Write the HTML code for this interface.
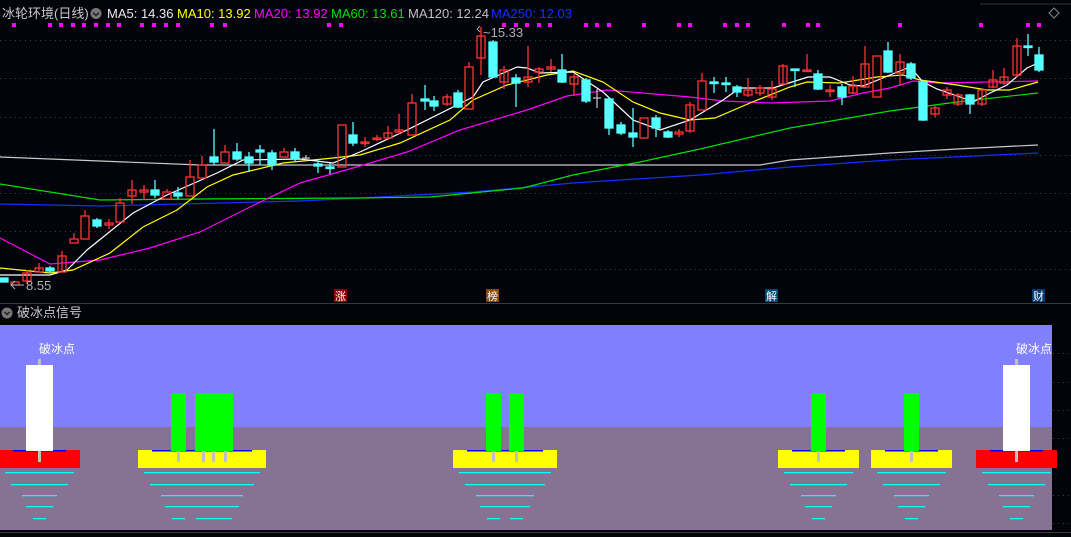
<!DOCTYPE html>
<html><head><meta charset="utf-8">
<style>
html,body{margin:0;padding:0;background:#03040b;width:1071px;height:537px;overflow:hidden}
svg{display:block}
text{font-family:"Liberation Sans","Noto Sans CJK SC",sans-serif}
</style></head>
<body>
<svg width="1071" height="537" viewBox="0 0 1071 537" xmlns="http://www.w3.org/2000/svg">
<rect width="1071" height="537" fill="#03040b"/>
<!-- header -->
<line x1="980" y1="4" x2="1071" y2="4" stroke="#333" stroke-width="1"/>
<text x="2" y="18" font-size="13" fill="#c8c8c8">冰轮环境(日线)</text>
<circle cx="96" cy="13.5" r="5.5" fill="#777"/>
<path d="M93 12.5 L96 15.5 L99 12.5" stroke="#222" stroke-width="1.5" fill="none"/>
<text x="107" y="18" font-size="13" fill="#e8e8e8">MA5: 14.36</text>
<text x="177" y="18" font-size="13" fill="#ffff00">MA10: 13.92</text>
<text x="254" y="18" font-size="13" fill="#ff00ff">MA20: 13.92</text>
<text x="331" y="18" font-size="13" fill="#00e000">MA60: 13.61</text>
<text x="408" y="18" font-size="13" fill="#c0c0c0">MA120: 12.24</text>
<text x="491" y="18" font-size="13" fill="#1030ff">MA250: 12.03</text>
<path d="M1054 8 L1059 13 L1054 18 L1049 13 Z" stroke="#888" fill="none"/>
<!-- magenta dots -->
<g fill="#ff00ff">
<rect x="12" y="23" width="4" height="4"/><rect x="48" y="23" width="4" height="4"/><rect x="59" y="23" width="4" height="4"/><rect x="71" y="23" width="4" height="4"/><rect x="82" y="23" width="4" height="4"/><rect x="94" y="23" width="4" height="4"/><rect x="106" y="23" width="4" height="4"/><rect x="117" y="23" width="4" height="4"/><rect x="140" y="23" width="4" height="4"/><rect x="152" y="23" width="4" height="4"/><rect x="164" y="23" width="4" height="4"/><rect x="176" y="23" width="4" height="4"/><rect x="210" y="23" width="4" height="4"/><rect x="223" y="23" width="4" height="4"/><rect x="327" y="23" width="4" height="4"/><rect x="339" y="23" width="4" height="4"/><rect x="502" y="23" width="4" height="4"/><rect x="514" y="23" width="4" height="4"/><rect x="525" y="23" width="4" height="4"/><rect x="537" y="23" width="4" height="4"/><rect x="548" y="23" width="4" height="4"/><rect x="584" y="23" width="4" height="4"/><rect x="595" y="23" width="4" height="4"/><rect x="607" y="23" width="4" height="4"/><rect x="642" y="23" width="4" height="4"/><rect x="677" y="23" width="4" height="4"/><rect x="688" y="23" width="4" height="4"/><rect x="723" y="23" width="4" height="4"/><rect x="735" y="23" width="4" height="4"/><rect x="746" y="23" width="4" height="4"/><rect x="782" y="23" width="4" height="4"/><rect x="806" y="23" width="4" height="4"/><rect x="816" y="23" width="4" height="4"/><rect x="898" y="23" width="4" height="4"/><rect x="979" y="23" width="4" height="4"/><rect x="1026" y="23" width="4" height="4"/><rect x="1037" y="23" width="4" height="4"/>
</g>
<!-- grid -->
<g stroke="#3a3a44" stroke-dasharray="1,4" stroke-width="1">
<line x1="0" y1="40.5" x2="1071" y2="40.5"/><line x1="0" y1="78.5" x2="1071" y2="78.5"/><line x1="0" y1="117.5" x2="1071" y2="117.5"/><line x1="0" y1="155.5" x2="1071" y2="155.5"/><line x1="0" y1="193.5" x2="1071" y2="193.5"/><line x1="0" y1="231.5" x2="1071" y2="231.5"/><line x1="0" y1="269.5" x2="1071" y2="269.5"/>
</g>
<!-- MA lines -->
<g fill="none" stroke-width="1.2">
<polyline stroke="#c8c8c8" points="0,157 100,161 200,165 360,165 680,165 760,165 790,160 890,153 957,149 1038,145"/>
<polyline stroke="#1030ff" points="0,204 100,206 300,201 360,198 473,192 573,183 700,175 790,167 890,160 1038,153"/>
<polyline stroke="#00e000" points="0,184 100,200 200,199 360,198 430,197 523,188 573,175 640,162 700,149 790,128 890,111 957,102 1038,93"/>
<polyline stroke="#ff00ff" points="0,238 50,264 100,260 150,248 200,232 250,207 300,183 360,166 407,152 460,130 527,110 567,96 607,90 690,97 723,101 770,103 830,101 863,93 890,88 913,81 937,83 1038,81"/>
<polyline stroke="#ffff00" points="0,268 50,273 73,270 110,253 143,227 177,210 207,187 233,175 283,163 333,158 360,155 400,143 450,120 473,100 507,85 547,75 573,71 603,82 633,102 660,113 690,120 715,118 750,103 790,87 807,82 840,83 877,77 903,75 920,80 957,85 987,90 1010,90 1038,82"/>
<polyline stroke="#ffffff" points="0,275 50,275 67,270 87,250 133,213 167,195 217,173 243,160 300,159 333,163 360,152 407,130 473,97 483,82 517,67 527,68 540,73 573,72 603,92 633,120 660,130 690,120 723,100 740,88 773,88 808,77 830,77 850,85 863,86 890,75 910,67 923,82 937,89 963,98 973,102 990,93 1007,85 1027,68 1038,63"/>
</g>
<!-- candles -->
<g stroke-width="1.3">
<g stroke="#ff3333" fill="none">
<rect x="11" y="282" width="8" height="3"/>
<line x1="27" y1="270" x2="27" y2="284"/><rect x="23" y="273" width="8" height="8"/>
<line x1="39" y1="263" x2="39" y2="272"/><rect x="35" y="268" width="8" height="4"/>
<line x1="62" y1="251" x2="62" y2="272"/><rect x="58" y="256" width="8" height="16"/>
<line x1="74" y1="233" x2="74" y2="239"/><rect x="70" y="239" width="8" height="4"/>
<line x1="85" y1="210" x2="85" y2="216"/><rect x="81" y="216" width="8" height="23"/>
<line x1="109" y1="219" x2="109" y2="229"/><rect x="105" y="223" width="8" height="2"/>
<line x1="120" y1="198" x2="120" y2="203"/><rect x="116" y="203" width="8" height="19"/>
<line x1="132" y1="180" x2="132" y2="204"/><rect x="128" y="190" width="8" height="6"/>
<line x1="144" y1="185" x2="144" y2="200"/><rect x="140" y="190" width="8" height="2"/>
<line x1="167" y1="189" x2="167" y2="192"/><rect x="163" y="192" width="8" height="7"/>
<line x1="190" y1="160" x2="190" y2="177"/><rect x="186" y="177" width="8" height="19"/>
<line x1="202" y1="156" x2="202" y2="165"/><rect x="198" y="165" width="8" height="13"/>
<line x1="225" y1="145" x2="225" y2="152"/><rect x="221" y="152" width="8" height="11"/>
<line x1="284" y1="148" x2="284" y2="152"/><rect x="280" y="152" width="8" height="5"/>
<rect x="338" y="125" width="8" height="42"/>
<line x1="365" y1="137" x2="365" y2="147"/><rect x="361" y="142" width="8" height="1.5"/>
<line x1="377" y1="135" x2="377" y2="141"/><rect x="373" y="138" width="8" height="1.5"/>
<line x1="388" y1="126" x2="388" y2="140"/><rect x="384" y="133" width="8" height="5"/>
<line x1="399" y1="114" x2="399" y2="134"/><rect x="395" y="130" width="8" height="2"/>
<line x1="412" y1="94" x2="412" y2="103"/><rect x="408" y="103" width="8" height="32"/>
<line x1="447" y1="94" x2="447" y2="106"/><rect x="443" y="97" width="8" height="7"/>
<line x1="469" y1="62" x2="469" y2="67"/><rect x="465" y="67" width="8" height="42"/>
<line x1="481" y1="27" x2="481" y2="75"/><rect x="477" y="36" width="8" height="22"/>
<line x1="504" y1="66" x2="504" y2="89"/><rect x="500" y="70" width="8" height="12"/>
<line x1="528" y1="46" x2="528" y2="87"/><rect x="524" y="77" width="8" height="5"/>
<line x1="539" y1="67" x2="539" y2="83"/><rect x="535" y="69" width="8" height="3"/>
<line x1="551" y1="59" x2="551" y2="72"/><rect x="547" y="67" width="8" height="2"/>
<line x1="574" y1="74" x2="574" y2="96"/><rect x="570" y="77" width="8" height="7"/>
<rect x="640" y="118" width="8" height="20"/>
<line x1="679" y1="129" x2="679" y2="137"/><rect x="675" y="132" width="8" height="2"/>
<line x1="690" y1="102" x2="690" y2="133"/><rect x="686" y="105" width="8" height="26"/>
<line x1="702" y1="73" x2="702" y2="81"/><rect x="698" y="81" width="8" height="29"/>
<line x1="748" y1="78" x2="748" y2="97"/><rect x="744" y="90" width="8" height="5"/>
<line x1="760" y1="85" x2="760" y2="96"/><rect x="756" y="88" width="8" height="5"/>
<line x1="772" y1="81" x2="772" y2="100"/><rect x="768" y="89" width="8" height="8"/>
<line x1="783" y1="64" x2="783" y2="86"/><rect x="779" y="66" width="8" height="18"/>
<line x1="807" y1="54" x2="807" y2="72"/><rect x="803" y="70" width="8" height="1.5"/>
<line x1="830" y1="85" x2="830" y2="97"/><rect x="826" y="90" width="8" height="1.5"/>
<line x1="853" y1="76" x2="853" y2="94"/><rect x="849" y="86" width="8" height="7"/>
<line x1="865" y1="46" x2="865" y2="88"/><rect x="861" y="64" width="8" height="23"/>
<rect x="873" y="56" width="8" height="41"/>
<line x1="900" y1="54" x2="900" y2="86"/><rect x="896" y="62" width="8" height="11"/>
<line x1="935" y1="105" x2="935" y2="117"/><rect x="931" y="108" width="8" height="6"/>
<line x1="947" y1="87" x2="947" y2="99"/><rect x="943" y="90" width="8" height="5"/>
<line x1="958" y1="93" x2="958" y2="106"/><rect x="954" y="95" width="8" height="9"/>
<line x1="982" y1="89" x2="982" y2="106"/><rect x="978" y="90" width="8" height="14"/>
<line x1="993" y1="70" x2="993" y2="88"/><rect x="989" y="80" width="8" height="7"/>
<line x1="1004" y1="68" x2="1004" y2="85"/><rect x="1000" y="77" width="8" height="6"/>
<line x1="1017" y1="38" x2="1017" y2="77"/><rect x="1013" y="46" width="8" height="29"/>
</g>
<g stroke="#54ffff" fill="#54ffff">
<rect x="0" y="278" width="8" height="4"/>
<line x1="50" y1="266" x2="50" y2="273"/><rect x="46" y="268" width="8" height="3"/>
<line x1="97" y1="218" x2="97" y2="228"/><rect x="93" y="220" width="8" height="6"/>
<line x1="155" y1="180" x2="155" y2="198"/><rect x="151" y="190" width="8" height="5"/>
<line x1="178" y1="187" x2="178" y2="199"/><rect x="174" y="193" width="8" height="3"/>
<line x1="214" y1="129" x2="214" y2="165"/><rect x="210" y="157" width="8" height="5"/>
<line x1="237" y1="143" x2="237" y2="161"/><rect x="233" y="152" width="8" height="7"/>
<line x1="249" y1="152" x2="249" y2="172"/><rect x="245" y="157" width="8" height="6"/>
<line x1="260" y1="145" x2="260" y2="165"/><rect x="256" y="150" width="8" height="2"/>
<line x1="272" y1="150" x2="272" y2="170"/><rect x="268" y="153" width="8" height="12"/>
<line x1="295" y1="148" x2="295" y2="162"/><rect x="291" y="152" width="8" height="7"/>
<line x1="318" y1="160" x2="318" y2="173"/><rect x="314" y="164" width="8" height="2"/>
<line x1="330" y1="163" x2="330" y2="174"/><rect x="326" y="167" width="8" height="1.5"/>
<line x1="353" y1="122" x2="353" y2="146"/><rect x="349" y="135" width="8" height="8"/>
<line x1="425" y1="85" x2="425" y2="110"/><rect x="421" y="99" width="8" height="2"/>
<line x1="434" y1="96" x2="434" y2="111"/><rect x="430" y="101" width="8" height="5"/>
<line x1="458" y1="90" x2="458" y2="108"/><rect x="454" y="93" width="8" height="14"/>
<line x1="493" y1="40" x2="493" y2="77"/><rect x="489" y="42" width="8" height="35"/>
<line x1="516" y1="74" x2="516" y2="107"/><rect x="512" y="78" width="8" height="5"/>
<line x1="562" y1="54" x2="562" y2="83"/><rect x="558" y="70" width="8" height="12"/>
<line x1="586" y1="78" x2="586" y2="103"/><rect x="582" y="80" width="8" height="21"/>
<line x1="609" y1="97" x2="609" y2="135"/><rect x="605" y="99" width="8" height="29"/>
<line x1="621" y1="122" x2="621" y2="135"/><rect x="617" y="125" width="8" height="8"/>
<line x1="633" y1="108" x2="633" y2="147"/><rect x="629" y="133" width="8" height="4"/>
<line x1="656" y1="115" x2="656" y2="137"/><rect x="652" y="118" width="8" height="10"/>
<line x1="668" y1="130" x2="668" y2="138"/><rect x="664" y="132" width="8" height="5"/>
<line x1="714" y1="77" x2="714" y2="93"/><rect x="710" y="82" width="8" height="1.5"/>
<line x1="726" y1="77" x2="726" y2="92"/><rect x="722" y="83" width="8" height="1.5"/>
<line x1="737" y1="85" x2="737" y2="97"/><rect x="733" y="87" width="8" height="5"/>
<line x1="795" y1="69" x2="795" y2="87"/><rect x="791" y="69" width="8" height="1.5"/>
<line x1="818" y1="70" x2="818" y2="90"/><rect x="814" y="74" width="8" height="15"/>
<line x1="842" y1="84" x2="842" y2="105"/><rect x="838" y="87" width="8" height="10"/>
<line x1="888" y1="42" x2="888" y2="73"/><rect x="884" y="51" width="8" height="21"/>
<line x1="911" y1="62" x2="911" y2="80"/><rect x="907" y="64" width="8" height="14"/>
<line x1="923" y1="80" x2="923" y2="121"/><rect x="919" y="82" width="8" height="38"/>
<line x1="970" y1="94" x2="970" y2="114"/><rect x="966" y="95" width="8" height="9"/>
<line x1="1028" y1="34" x2="1028" y2="56"/><rect x="1024" y="46" width="8" height="1.5"/>
<line x1="1039" y1="47" x2="1039" y2="72"/><rect x="1035" y="55" width="8" height="15"/>
</g>
<g stroke="#bbbbbb">
<line x1="306" y1="155" x2="306" y2="161"/><line x1="302" y1="158" x2="310" y2="158"/>
<line x1="597" y1="89" x2="597" y2="108"/><line x1="593" y1="98" x2="601" y2="98"/>
</g>
</g>
<!-- labels -->
<path d="M477 29 L480 26 M477 29 L480 32" stroke="#aaa" fill="none"/>
<text x="483" y="37" font-size="13" fill="#b0b0b0">~15.33</text>
<path d="M11 285 L15 281 M11 285 L15 289 M11 285 L24 285" stroke="#aaa" fill="none"/>
<text x="26" y="290" font-size="13" fill="#b0b0b0">8.55</text>
<rect x="334" y="289" width="13" height="13" fill="#8b0000"/><text x="335" y="300" font-size="11" fill="#fff">涨</text>
<rect x="486" y="289" width="13" height="13" fill="#8b4500"/><text x="487" y="300" font-size="11" fill="#fff">榜</text>
<rect x="765" y="289" width="13" height="13" fill="#004a70"/><text x="766" y="300" font-size="11" fill="#fff">解</text>
<rect x="1032" y="289" width="13" height="13" fill="#003a70"/><text x="1033" y="300" font-size="11" fill="#fff">财</text>
<line x1="0" y1="303.5" x2="1071" y2="303.5" stroke="#3a3a3a" stroke-width="1"/>
<!-- lower panel header -->
<circle cx="7" cy="313" r="5.5" fill="#777"/>
<path d="M4.5 312 L7 314.5 L9.5 312" stroke="#222" stroke-width="1.5" fill="none"/>
<text x="17" y="317" font-size="13" fill="#c8c8c8">破冰点信号</text>
<!-- lower panel -->
<rect x="0" y="325" width="1052" height="102" fill="#8080ff"/>
<rect x="0" y="427" width="1052" height="103" fill="#867292"/>
<line x1="0" y1="532.5" x2="1071" y2="532.5" stroke="#3a3a3a"/>
<g stroke="#3a3a44" stroke-dasharray="1,4"><line x1="1053" y1="353.5" x2="1071" y2="353.5"/><line x1="1053" y1="382.5" x2="1071" y2="382.5"/><line x1="1053" y1="410.5" x2="1071" y2="410.5"/><line x1="1053" y1="438.5" x2="1071" y2="438.5"/><line x1="1053" y1="495.5" x2="1071" y2="495.5"/><line x1="1053" y1="523.5" x2="1071" y2="523.5"/></g>
<!-- bases -->
<rect x="0" y="450" width="80" height="18" fill="#ff0000"/>
<rect x="138" y="450" width="128" height="18" fill="#ffff00"/>
<rect x="453" y="450" width="104" height="18" fill="#ffff00"/>
<rect x="778" y="450" width="81" height="18" fill="#ffff00"/>
<rect x="871" y="450" width="81" height="18" fill="#ffff00"/>
<rect x="976" y="450" width="81" height="18" fill="#ff0000"/>
<g fill="#0000ff">
<rect x="13" y="450" width="53" height="1.5"/><rect x="152" y="450" width="100" height="1.5"/><rect x="467" y="450" width="76" height="1.5"/><rect x="792" y="450" width="53" height="1.5"/><rect x="885" y="450" width="53" height="1.5"/><rect x="990" y="450" width="53" height="1.5"/>
</g>
<!-- wicks -->
<g fill="#c0c0c0">
<rect x="38" y="359" width="3" height="103"/>
<rect x="177" y="451" width="3" height="11"/><rect x="202" y="451" width="3" height="11"/><rect x="212" y="451" width="3" height="11"/><rect x="224" y="451" width="3" height="11"/>
<rect x="492" y="451" width="3" height="11"/><rect x="515" y="451" width="3" height="11"/>
<rect x="817" y="451" width="3" height="11"/><rect x="910" y="451" width="3" height="11"/>
<rect x="1015" y="359" width="3" height="103"/>
</g>
<rect x="26" y="365" width="27" height="86" fill="#ffffff"/>
<rect x="1003" y="365" width="27" height="86" fill="#ffffff"/>
<g fill="#00ff00">
<rect x="171" y="393" width="15" height="58"/><rect x="195" y="393" width="38" height="58"/>
<rect x="486" y="393" width="15" height="58"/><rect x="509" y="393" width="15" height="58"/>
<rect x="811" y="393" width="15" height="58"/><rect x="904" y="393" width="15" height="58"/>
</g>
<text x="39" y="353" font-size="12" fill="#ffffff">破冰点</text>
<svg x="0" y="330" width="1052" height="40"><text x="1016" y="23" font-size="12" fill="#ffffff">破冰点</text></svg>
<!-- cyan ripples -->
<g fill="#00ffff">
<rect x="5" y="472" width="69" height="1.3"/><rect x="11" y="484" width="57" height="1.3"/><rect x="22" y="495" width="35" height="1.3"/><rect x="26" y="506" width="27" height="1.3"/><rect x="33" y="518" width="13" height="1.3"/>
<rect x="144" y="472" width="116" height="1.3"/><rect x="150" y="484" width="104" height="1.3"/><rect x="161" y="495" width="82" height="1.3"/><rect x="165" y="506" width="74" height="1.3"/><rect x="172" y="518" width="13" height="1.3"/><rect x="196" y="518" width="36" height="1.3"/>
<rect x="459" y="472" width="92" height="1.3"/><rect x="465" y="484" width="80" height="1.3"/><rect x="476" y="495" width="58" height="1.3"/><rect x="480" y="506" width="50" height="1.3"/><rect x="487" y="518" width="13" height="1.3"/><rect x="510" y="518" width="13" height="1.3"/>
<rect x="784" y="472" width="69" height="1.3"/><rect x="790" y="484" width="57" height="1.3"/><rect x="801" y="495" width="35" height="1.3"/><rect x="805" y="506" width="27" height="1.3"/><rect x="812" y="518" width="13" height="1.3"/>
<rect x="877" y="472" width="69" height="1.3"/><rect x="883" y="484" width="57" height="1.3"/><rect x="894" y="495" width="35" height="1.3"/><rect x="898" y="506" width="27" height="1.3"/><rect x="905" y="518" width="13" height="1.3"/>
<rect x="982" y="472" width="69" height="1.3"/><rect x="988" y="484" width="57" height="1.3"/><rect x="999" y="495" width="35" height="1.3"/><rect x="1003" y="506" width="27" height="1.3"/><rect x="1010" y="518" width="13" height="1.3"/>
</g>
</svg>
</body></html>
